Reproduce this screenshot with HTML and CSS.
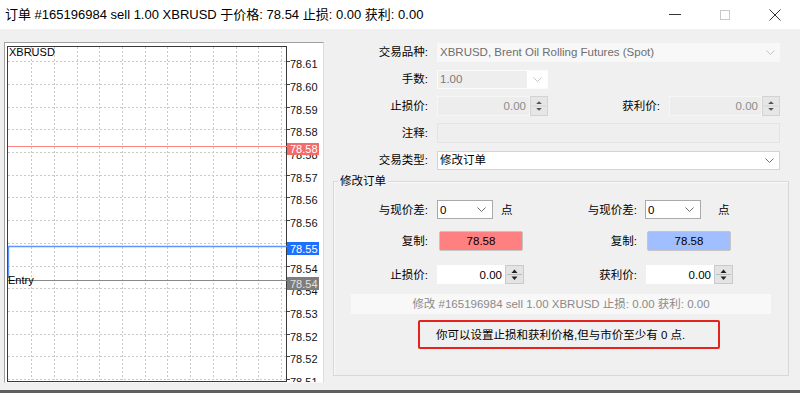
FILE: index.html
```html
<!DOCTYPE html>
<html lang="zh">
<head>
<meta charset="utf-8">
<title>订单</title>
<link rel="stylesheet" href="styles.css">
</head>
<body>
<div class="titlebar">
  <div class="title">订单 #165196984 sell 1.00 XBRUSD 于价格: 78.54 止损: 0.00 获利: 0.00</div>
  <div class="controls">
    <span class="ctl"><svg width="12" height="1" viewBox="0 0 12 1"><rect width="12" height="1" fill="#333"/></svg></span>
    <span class="ctl"><svg width="10" height="10" viewBox="0 0 10 10"><rect x=".5" y=".5" width="9" height="9" fill="none" stroke="#c9c9c9"/></svg></span>
    <span class="ctl"><svg width="12" height="12" viewBox="0 0 12 12"><path d="M.5 .5L11.5 11.5M11.5 .5L.5 11.5" stroke="#333" fill="none"/></svg></span>
  </div>
</div>

<div class="main">
  <div class="chart-panel">
    <svg class="chart" width="318" height="339" viewBox="0 0 318 339">
      <g class="grid">
        <line x1="26.5" y1="4" x2="26.5" y2="337"/><line x1="49.5" y1="4" x2="49.5" y2="337"/>
        <line x1="72.5" y1="4" x2="72.5" y2="337"/><line x1="94.5" y1="4" x2="94.5" y2="337"/>
        <line x1="117.5" y1="4" x2="117.5" y2="337"/><line x1="140.5" y1="4" x2="140.5" y2="337"/>
        <line x1="162.5" y1="4" x2="162.5" y2="337"/><line x1="185.5" y1="4" x2="185.5" y2="337"/>
        <line x1="208.5" y1="4" x2="208.5" y2="337"/><line x1="231.5" y1="4" x2="231.5" y2="337"/>
        <line x1="253.5" y1="4" x2="253.5" y2="337"/><line x1="276.5" y1="4" x2="276.5" y2="337"/>
        <line x1="3" y1="18.5" x2="281" y2="18.5"/><line x1="3" y1="41.5" x2="281" y2="41.5"/>
        <line x1="3" y1="64.5" x2="281" y2="64.5"/><line x1="3" y1="86.5" x2="281" y2="86.5"/>
        <line x1="3" y1="109.5" x2="281" y2="109.5"/><line x1="3" y1="132.5" x2="281" y2="132.5"/>
        <line x1="3" y1="154.5" x2="281" y2="154.5"/><line x1="3" y1="177.5" x2="281" y2="177.5"/>
        <line x1="3" y1="200.5" x2="281" y2="200.5"/><line x1="3" y1="223.5" x2="281" y2="223.5"/>
        <line x1="3" y1="245.5" x2="281" y2="245.5"/><line x1="3" y1="268.5" x2="281" y2="268.5"/>
        <line x1="3" y1="291.5" x2="281" y2="291.5"/><line x1="3" y1="313.5" x2="281" y2="313.5"/>
        <line x1="3" y1="336.5" x2="281" y2="336.5"/>
      </g>
      <g class="ticks">
        <line x1="282" y1="18.5" x2="285" y2="18.5"/><line x1="282" y1="41.5" x2="285" y2="41.5"/>
        <line x1="282" y1="64.5" x2="285" y2="64.5"/><line x1="282" y1="86.5" x2="285" y2="86.5"/>
        <line x1="282" y1="109.5" x2="285" y2="109.5"/><line x1="282" y1="132.5" x2="285" y2="132.5"/>
        <line x1="282" y1="154.5" x2="285" y2="154.5"/><line x1="282" y1="177.5" x2="285" y2="177.5"/>
        <line x1="282" y1="200.5" x2="285" y2="200.5"/><line x1="282" y1="223.5" x2="285" y2="223.5"/>
        <line x1="282" y1="245.5" x2="285" y2="245.5"/><line x1="282" y1="268.5" x2="285" y2="268.5"/>
        <line x1="282" y1="291.5" x2="285" y2="291.5"/><line x1="282" y1="313.5" x2="285" y2="313.5"/>
        <line x1="282" y1="336.5" x2="285" y2="336.5"/>
      </g>
      <rect class="frame" x="2.5" y="3.5" width="279" height="335"/>
      <g class="axis">
        <text x="285" y="25">78.61</text><text x="285" y="48">78.60</text>
        <text x="285" y="71">78.59</text><text x="285" y="93">78.58</text>
        <text x="285" y="116">78.58</text><text x="285" y="139">78.57</text>
        <text x="285" y="161">78.56</text><text x="285" y="184">78.56</text>
        <text x="285" y="207">78.55</text><text x="285" y="230">78.54</text>
        <text x="285" y="252">78.54</text><text x="285" y="275">78.53</text>
        <text x="285" y="298">78.52</text><text x="285" y="320">78.52</text>
        <text x="285" y="343">78.51</text>
      </g>
      <text class="sym" x="4" y="13">XBRUSD</text>

      <line class="ln-red" x1="3" y1="103.5" x2="282" y2="103.5"/>
      <rect class="tag-red" x="282" y="100" width="32" height="12"/>
      <text class="tag-txt" x="285" y="109.5">78.58</text>

      <line class="ln-blue" x1="3" y1="203.5" x2="282" y2="203.5"/>
      <line class="ln-blue" x1="3.5" y1="203.5" x2="3.5" y2="235"/>
      <rect class="tag-blue" x="282" y="199" width="32" height="13"/>
      <text class="tag-txt" x="285" y="209.5">78.55</text>

      <line class="ln-gray" x1="3" y1="237.5" x2="282" y2="237.5"/>
      <rect class="tag-gray" x="282" y="234" width="32" height="13"/>
      <text class="tag-txt tag-txt-gray" x="285" y="244.5">78.54</text>
      <text class="entry" x="3" y="241">Entry</text>
    </svg>
  </div>

  <div class="form">
    <div class="frow">
      <div class="lbl">交易品种:</div>
      <div class="combo combo-off">
        <span class="combo-txt">XBRUSD, Brent Oil Rolling Futures (Spot)</span>
        <svg class="chev" width="9" height="5" viewBox="0 0 9 5"><polyline points="0.5,0.5 4.5,4.5 8.5,0.5" fill="none" stroke="#c4c4c4"/></svg>
      </div>
    </div>
    <div class="frow">
      <div class="lbl">手数:</div>
      <div class="lots">
        <span class="lots-val">1.00</span>
        <span class="lots-btn"><svg width="9" height="5" viewBox="0 0 9 5"><polyline points="0.5,0.5 4.5,4.5 8.5,0.5" fill="none" stroke="#c4c4c4"/></svg></span>
      </div>
    </div>
    <div class="frow">
      <div class="lbl">止损价:</div>
      <div class="spin spin-off">
        <span class="spin-val">0.00</span>
        <span class="spin-btn"><svg width="17" height="18" viewBox="0 0 17 18"><polygon points="5.5,7 8.5,4 11.5,7" fill="#555"/><line x1="1" y1="9" x2="16" y2="9" stroke="#d2d2d2"/><polygon points="5.5,11 8.5,14 11.5,11" fill="#555"/></svg></span>
      </div>
      <div class="lbl lbl-fill">获利价:</div>
      <div class="spin spin-off">
        <span class="spin-val">0.00</span>
        <span class="spin-btn"><svg width="17" height="18" viewBox="0 0 17 18"><polygon points="5.5,7 8.5,4 11.5,7" fill="#555"/><line x1="1" y1="9" x2="16" y2="9" stroke="#d2d2d2"/><polygon points="5.5,11 8.5,14 11.5,11" fill="#555"/></svg></span>
      </div>
    </div>
    <div class="frow">
      <div class="lbl">注释:</div>
      <div class="comment"></div>
    </div>
    <div class="frow">
      <div class="lbl">交易类型:</div>
      <div class="combo combo-on">
        <span class="combo-txt">修改订单</span>
        <svg class="chev" width="9" height="5" viewBox="0 0 9 5"><polyline points="0.5,0.5 4.5,4.5 8.5,0.5" fill="none" stroke="#707070"/></svg>
      </div>
    </div>

    <div class="group">
      <span class="legend">修改订单</span>
      <div class="grow row-a">
        <div class="glbl">与现价差:</div>
        <div class="cell">
          <div class="sel"><span>0</span><svg width="9" height="5" viewBox="0 0 9 5"><polyline points="0.5,0.5 4.5,4.5 8.5,0.5" fill="none" stroke="#6a6a6a"/></svg></div>
          <span class="unit">点</span>
        </div>
        <div class="glbl glbl-r">与现价差:</div>
        <div class="cell">
          <div class="sel"><span>0</span><svg width="9" height="5" viewBox="0 0 9 5"><polyline points="0.5,0.5 4.5,4.5 8.5,0.5" fill="none" stroke="#6a6a6a"/></svg></div>
          <span class="unit unit-r">点</span>
        </div>
      </div>
      <div class="grow row-b">
        <div class="glbl">复制:</div>
        <div class="cell"><div class="copy copy-red">78.58</div></div>
        <div class="glbl glbl-r">复制:</div>
        <div class="cell"><div class="copy copy-blue">78.58</div></div>
      </div>
      <div class="grow row-c">
        <div class="glbl">止损价:</div>
        <div class="cell">
          <div class="spin spin-on">
            <span class="spin-val">0.00</span>
            <span class="spin-btn"><svg width="17" height="17" viewBox="0 0 17 17"><polygon points="5.5,7 8.5,3.5 11.5,7" fill="#222"/><line x1="1" y1="8.5" x2="16" y2="8.5" stroke="#bdbdbd"/><polygon points="5.5,10.5 8.5,14 11.5,10.5" fill="#222"/></svg></span>
          </div>
        </div>
        <div class="glbl glbl-r">获利价:</div>
        <div class="cell">
          <div class="spin spin-on spin-r">
            <span class="spin-val">0.00</span>
            <span class="spin-btn"><svg width="17" height="17" viewBox="0 0 17 17"><polygon points="5.5,7 8.5,3.5 11.5,7" fill="#222"/><line x1="1" y1="8.5" x2="16" y2="8.5" stroke="#bdbdbd"/><polygon points="5.5,10.5 8.5,14 11.5,10.5" fill="#222"/></svg></span>
          </div>
        </div>
      </div>
      <div class="info">修改 #165196984 sell 1.00 XBRUSD 止损: 0.00 获利: 0.00</div>
      <div class="notice">你可以设置止损和获利价格,但与市价至少有 0 点.</div>
    </div>
  </div>
</div>
<div class="bottom-edge"></div>
</body>
</html>
```

FILE: styles.css
```css
* { box-sizing: border-box; }
html, body { margin: 0; padding: 0; }
body {
  width: 800px;
  height: 393px;
  overflow: hidden;
  background: #f0f0f0;
  font-family: "Liberation Sans", "Noto Sans CJK SC", sans-serif;
  font-size: 11.5px;
  line-height: 14px;
  color: #000;
}

/* title bar */
.titlebar {
  height: 29px;
  background: #fff;
  display: flex;
  align-items: center;
}
.title {
  flex: 1;
  padding-left: 5px;
  font-size: 13px;
  line-height: 16px;
  white-space: nowrap;
}
.controls { display: flex; height: 29px; }
.ctl {
  width: 50px;
  display: flex;
  align-items: center;
  justify-content: center;
}
.ctl svg { display: block; }

/* main */
.main {
  display: flex;
  height: 361px;
  padding: 13px 11px 0 4px;
}

/* chart */
.chart-panel {
  flex: none;
  width: 320px;
  height: 341px;
  background: #fff;
  border: 1px solid;
  border-color: #a0a0a0 #dcdcdc #f6f6f6 #a0a0a0;
}
.chart { display: block; }
.grid line { stroke: #c9c9c9; stroke-width: 1; stroke-dasharray: 2 2; }
.ticks line { stroke: #404040; stroke-width: 1; }
.frame { fill: none; stroke: #3a3a3a; stroke-width: 1; }
.axis text, .sym, .entry, .tag-txt {
  font-family: "Liberation Sans", sans-serif;
  font-size: 11px;
}
.axis text { fill: #111; }
.sym, .entry { fill: #000; }
.ln-red { stroke: #ff8585; stroke-width: 1.2; }
.ln-blue { stroke: #5e95ff; stroke-width: 1.4; }
.ln-gray { stroke: #8a8a8a; stroke-width: 1; }
.tag-red { fill: #f26c6c; }
.tag-blue { fill: #1f6fff; }
.tag-gray { fill: #7d7d7d; }
.tag-txt { fill: #fff; }
.tag-txt-gray { fill: #e2e2e2; }

/* form */
.form {
  flex: 1;
  margin-left: 9px;
}
.frow {
  display: flex;
  align-items: center;
  height: 20px;
  margin-bottom: 7px;
  padding-right: 9px;
}
.lbl {
  flex: none;
  width: 95px;
  margin-right: 9px;
  text-align: right;
  white-space: nowrap;
}
.lbl-fill { flex: 1; width: auto; }

.combo {
  flex: 1;
  height: 19px;
  display: flex;
  align-items: center;
  justify-content: space-between;
  padding: 0 5px 0 3px;
}
.combo-off { background: #f8f8f8; color: #6e6e6e; }
.combo-on { background: #fff; border: 1px solid #d4d4d4; padding-left: 2px; }
.chev { display: block; }

.lots {
  display: flex;
  width: 111px;
  height: 19px;
  border: 1px solid #fbfbfb;
}
.lots-val {
  flex: 1;
  background: #eeeeee;
  color: #7a7a7a;
  padding-left: 2px;
  display: flex;
  align-items: center;
}
.lots-btn {
  width: 20px;
  background: #fff;
  display: flex;
  align-items: center;
  justify-content: center;
}
.lots-btn svg { display: block; }

.spin {
  display: flex;
  height: 20px;
  width: 111px;
}
.spin-val {
  flex: 1;
  display: flex;
  align-items: center;
  justify-content: flex-end;
  padding-right: 3px;
}
.spin-btn {
  width: 18px;
  display: flex;
  align-items: center;
  justify-content: center;
  border: 1px solid #d3d3d3;
  background: #e6e6e6;
}
.spin-btn svg { display: block; }
.spin-off .spin-val {
  background: #ededed;
  border: 1px solid #f6f6f6;
  color: #8c8c8c;
}

.comment {
  flex: 1;
  height: 20px;
  background: #efefef;
  border: 1px solid #e4e4e4;
}

/* group box */
.group {
  position: relative;
  margin-top: 11px;
  height: 195px;
  border: 1px solid #d8d8d8;
  box-shadow: inset 1px 1px 0 #fafafa;
  padding-top: 18px;
}
.legend {
  position: absolute;
  top: -8px;
  left: 4px;
  padding: 0 2px;
  background: #f0f0f0;
  line-height: 14px;
}
.grow {
  display: grid;
  grid-template-columns: 103px 110px 98px 1fr;
  align-items: center;
}
.row-a { height: 19px; }
.row-b { height: 20px; margin-top: 12px; }
.row-c { height: 19px; margin-top: 14px; }
.glbl {
  text-align: right;
  padding-right: 9px;
  white-space: nowrap;
}
.glbl-r { padding-right: 8px; }
.cell { display: flex; align-items: center; height: 100%; }

.sel {
  width: 56px;
  height: 19px;
  background: #fff;
  border: 1px solid #a9a9a9;
  display: flex;
  align-items: center;
  justify-content: space-between;
  padding: 0 6px 0 2px;
}
.sel svg { display: block; }
.unit { margin-left: 8px; }
.unit-r { margin-left: 17px; }

.copy {
  margin-left: 2px;
  width: 84px;
  height: 20px;
  border: 1px solid #c6c6c6;
  border-radius: 2px;
  display: flex;
  align-items: center;
  justify-content: center;
}
.copy-red { background: #ff8080; }
.copy-blue { background: #a1bfff; }

.spin-on { width: 87px; height: 19px; }
.spin-on .spin-val { background: #fff; }
.spin-on .spin-btn { width: 19px; background: #e3e3e3; border-color: #cacaca; }
.spin-r { margin-left: 1px; }

.info {
  margin: 10px 17px 0 17px;
  height: 20px;
  background: #f8f8f8;
  color: #8a8a8a;
  display: flex;
  align-items: center;
  justify-content: center;
  white-space: nowrap;
}
.notice {
  margin: 6px 0 0 84px;
  width: 302px;
  height: 29px;
  border: 2.5px solid #e5221e;
  border-radius: 2px;
  display: flex;
  align-items: center;
  padding-left: 16px;
  white-space: nowrap;
}

.bottom-edge {
  height: 3px;
  background: #5f5f5f;
}
```
